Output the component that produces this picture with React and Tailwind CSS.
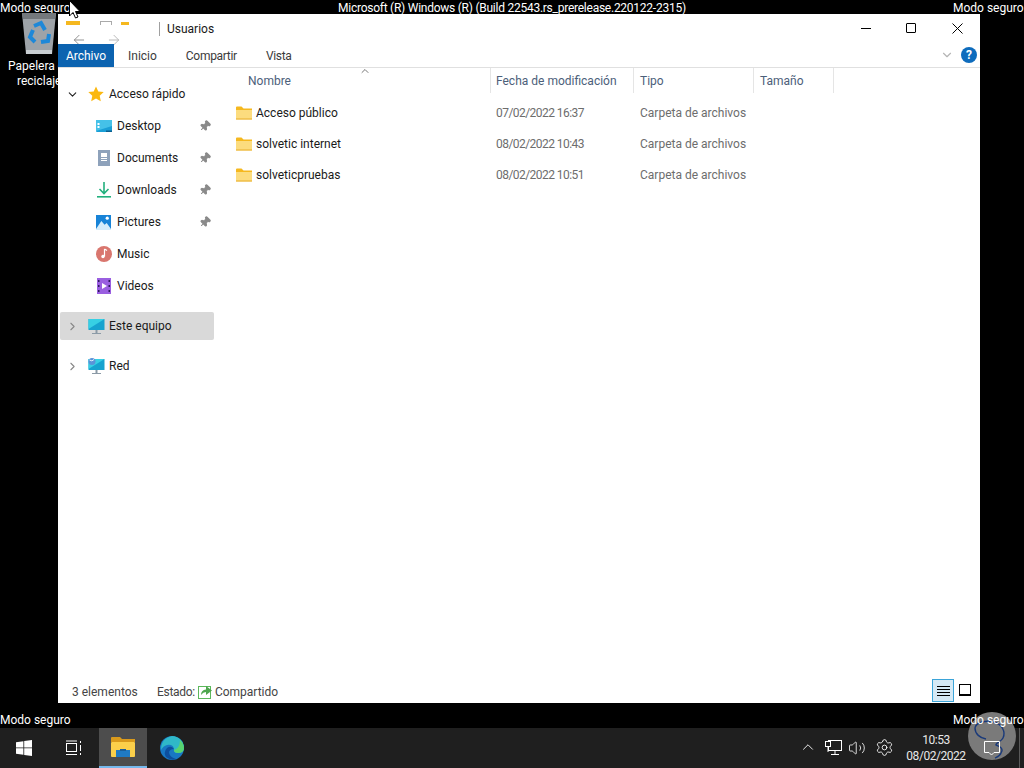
import React from 'react';
import { ChevronDown, ChevronRight, ChevronUp, Pin, ArrowLeft, ArrowRight, Settings, Volume2 } from 'lucide-react';

const font = { fontFamily: 'Roboto, "Noto Sans", sans-serif' };

function FolderIcon() {
  return (
    <svg width="16" height="14" viewBox="0 0 16 14" className="shrink-0">
      <path d="M0 1.5 Q0 0.5 1 0.5 H5.5 L7.5 2.5 H16 V13 H0 Z" fill="#f5b81f" />
      <path d="M0 4 H16 V13 Q16 13.5 15 13.5 H1 Q0 13.5 0 13 Z" fill="#fcdc7e" />
      <path d="M0 12.5 H16 V13.5 H0 Z" fill="#e8ae2c" />
    </svg>
  );
}

function DesktopIcon() {
  return (
    <svg width="16" height="12" viewBox="0 0 16 12">
      <rect width="16" height="12" rx="1" fill="#1a9fd6" />
      <path d="M0 0 H16 V6 L0 11 Z" fill="#45c1e8" />
      <rect x="1.5" y="3" width="2" height="2" fill="#fff" />
      <rect x="1.5" y="6" width="2" height="2" fill="#fff" />
      <rect x="10" y="10.5" width="6" height="1.5" fill="#0b5f8f" />
    </svg>
  );
}

function DocumentsIcon() {
  return (
    <svg width="12" height="16" viewBox="0 0 12 16">
      <rect width="12" height="16" fill="#8ea2bb" />
      <rect x="3" y="3" width="6" height="4" fill="#fff" />
      <rect x="3" y="8" width="6" height="1" fill="#fff" />
      <rect x="3" y="10" width="6" height="1" fill="#fff" />
    </svg>
  );
}

function DownloadsIcon() {
  return (
    <svg width="14" height="16" viewBox="0 0 14 16">
      <path d="M7 0 V11 M2.5 7 L7 11.5 L11.5 7" fill="none" stroke="#22b07d" strokeWidth="1.6" />
      <rect y="14" width="14" height="1.6" fill="#22b07d" />
    </svg>
  );
}

function PicturesIcon() {
  return (
    <svg width="15" height="15" viewBox="0 0 14 14">
      <rect width="14" height="14" fill="#1883d7" />
      <circle cx="10.5" cy="3" r="1.5" fill="#fff" />
      <path d="M0 13 L5 5.5 L8 9 L10 7.5 L14 13 V14 H0 Z" fill="#d5ecfb" />
    </svg>
  );
}

function MusicIcon() {
  return (
    <svg width="16" height="16" viewBox="0 0 16 16">
      <circle cx="8" cy="8" r="8" fill="#d9766e" />
      <path d="M8.5 3 V10.5" stroke="#fff" strokeWidth="1.2" />
      <path d="M8.5 3 L11 4.5" stroke="#fff" strokeWidth="1.2" />
      <circle cx="7" cy="10.5" r="1.7" fill="#fff" />
    </svg>
  );
}

function VideosIcon() {
  return (
    <svg width="14" height="16" viewBox="0 0 14 16">
      <rect width="14" height="16" fill="#9a5fe0" />
      <path d="M5 5 L10 8 L5 11 Z" fill="#fff" />
      <rect x="1" y="2" width="1.5" height="2" fill="#2d1a5c" />
      <rect x="1" y="7" width="1.5" height="2" fill="#2d1a5c" />
      <rect x="1" y="12" width="1.5" height="2" fill="#2d1a5c" />
      <rect x="11.5" y="2" width="1.5" height="2" fill="#2d1a5c" />
      <rect x="11.5" y="7" width="1.5" height="2" fill="#2d1a5c" />
      <rect x="11.5" y="12" width="1.5" height="2" fill="#2d1a5c" />
    </svg>
  );
}

function MonitorIcon({ globe }) {
  return (
    <svg width="17" height="17" viewBox="0 0 17 17">
      <rect x="0.5" y="1" width="16" height="11" fill="#17a3cf" />
      <path d="M0.5 1 H16.5 L0.5 11 Z" fill="#37d0e4" />
      <rect x="7.5" y="12" width="2" height="3" fill="#8b9aa6" />
      <rect x="4" y="15" width="9" height="1" fill="#8b9aa6" />
      {globe && <circle cx="4" cy="3.5" r="3.5" fill="#5a93d8" />}
      {globe && <path d="M1.5 2 Q4 4 6 1.5" stroke="#dff0fb" fill="none" />}
    </svg>
  );
}

function NavRow({ icon, label, pinned }) {
  return (
    <div className="h-8 flex items-center pl-[37px] relative">
      <span className="w-[17px] h-4 flex items-center justify-center shrink-0">{icon}</span>
      <span className="ml-[5px] text-[12px] text-[#1a1a1a]">{label}</span>
      {pinned && (
        <Pin size={12} className="absolute left-[141px] text-[#8a8a8a] fill-[#8a8a8a] rotate-45" />
      )}
    </div>
  );
}

function FileRow({ name, date }) {
  return (
    <div className="h-[31px] flex items-center text-[12px]">
      <span className="w-[254px] pl-[6px] flex items-center gap-[4px] text-[#1a1a1a]">
        <FolderIcon />
        {name}
      </span>
      <span className="w-[156px] pl-[12px] text-[#6d6d6d] tracking-[-0.55px]">{date}</span>
      <span className="text-[#6d6d6d]">Carpeta de archivos</span>
    </div>
  );
}

function HeaderCell({ label, className }) {
  return (
    <div className={`h-[25px] flex items-center border-r border-[#e5e5e5] text-[12px] text-[#4c607a] ${className}`}>
      {label}
    </div>
  );
}

function RecycleBin() {
  return (
    <svg width="36" height="42" viewBox="0 0 36 42">
      <path d="M1 0 H35 L31 41 H5 Z" fill="#9ea3a8" />
      <path d="M1 0 H35 L34 6 H2 Z" fill="#74787c" />
      <rect x="5" y="37" width="26" height="4" fill="#c9ced2" />
      <g fill="none" stroke="#1e88d8" strokeWidth="4">
        <path d="M13 13 L20 10 L24 17" />
        <path d="M28 21 L27 28 L20 29" />
        <path d="M14 29 L9 24 L12 17" />
      </g>
    </svg>
  );
}

function EdgeIcon() {
  return (
    <svg width="24" height="24" viewBox="0 0 24 24">
      <circle cx="12" cy="12" r="12" fill="#1878c4" />
      <path d="M12 0 A12 12 0 0 1 24 12 Q24 17 18 17 Q13 17 14 13 Q13 8 7 9 Q3 10 1 14 Q1 2 12 0 Z" fill="#2fb8c8" />
      <path d="M20 4 A12 12 0 0 1 24 12 Q24 17 18 17 Q14 17 14 14 Q20 12 20 4 Z" fill="#58d36f" />
      <path d="M14 13 Q10 13 9 16 Q9 21 16 23 Q11 25 6 21 Q3 16 7 12 Q11 9 14 13 Z" fill="#0d4f9e" />
    </svg>
  );
}

function ExplorerIcon() {
  return (
    <svg width="24" height="20" viewBox="0 0 24 20">
      <path d="M0 1 Q0 0 1 0 H9 L11 2 H24 V5 H0 Z" fill="#d99a1c" />
      <rect y="5" width="24" height="15" rx="1" fill="#fbcf4a" />
      <rect x="5" y="13" width="14" height="7" fill="#1f7ac4" />
      <rect x="9" y="12" width="6" height="2" fill="#1b5e9a" />
    </svg>
  );
}

export default function App() {
  return (
    <div className="w-[1024px] h-[768px] bg-black relative overflow-hidden flex flex-col" style={font}>
      {/* desktop */}
      <div className="flex-1 relative text-white text-[12px] whitespace-nowrap">
        <span className="absolute left-0 top-px leading-[14px]">Modo seguro</span>
        <span className="absolute left-[338px] top-px leading-[14px] tracking-[-0.25px]">Microsoft (R) Windows (R) (Build 22543.rs_prerelease.220122-2315)</span>
        <span className="absolute left-[953px] top-px leading-[14px]">Modo seguro</span>
        <span className="absolute left-0 top-[713px] leading-[14px]">Modo seguro</span>
        <span className="absolute left-[953px] top-[713px] leading-[14px] z-10">Modo seguro</span>

        <div className="absolute left-[21px] top-[13px]"><RecycleBin /></div>
        <span className="absolute left-[8px] top-[59px] leading-[14px]">Papelera de</span>
        <span className="absolute left-[17px] top-[74px] leading-[14px]">reciclaje</span>

        {/* explorer window */}
        <div className="absolute left-[58px] top-[14px] w-[922px] h-[689px] bg-white flex flex-col text-[#1a1a1a]">
          <div className="h-[30px] flex items-center shrink-0 relative">
            <div className="absolute left-[8px] top-[7px] w-[14px] h-[4px] bg-[#f5b81f]" />
            <div className="absolute left-[42px] top-[7px] w-[12px] h-[4px] border border-b-0 border-[#aaa]" />
            <div className="absolute left-[63px] top-[8px] w-[8px] h-[3px] bg-[#f5b81f]" />
            <ArrowLeft size={16} className="absolute left-[13px] top-[18px] text-[#8a8a8a]" strokeWidth={1.4} />
            <ArrowRight size={16} className="absolute left-[48px] top-[18px] text-[#b5b5b5]" strokeWidth={1.4} />
            <div className="absolute left-[101px] top-[8px] w-px h-[14px] bg-[#a0a0a0]" />
            <span className="absolute left-[109px] top-[7px] text-[12px] leading-[16px]">Usuarios</span>
            <div className="absolute left-[803px] top-[14px] w-[10px] h-px bg-black" />
            <div className="absolute left-[848px] top-[9px] w-[10px] h-[10px] border border-black rounded-[1px]" />
            <svg width="11" height="11" viewBox="0 0 11 11" className="absolute left-[894px] top-[9px]">
              <path d="M0.5 0.5 L10.5 10.5 M10.5 0.5 L0.5 10.5" stroke="#000" strokeWidth="1" />
            </svg>
          </div>
          <div className="h-[24px] flex items-stretch border-b border-[#e0e0e0] shrink-0 text-[12px] text-[#3b3b3b] relative">
            <div className="w-[56px] bg-[#0c63b0] text-white flex items-center justify-center">Archivo</div>
            <div className="ml-[14px] flex items-center">Inicio</div>
            <div className="ml-[29px] flex items-center tracking-[-0.3px]">Compartir</div>
            <div className="ml-[29px] flex items-center tracking-[-0.3px]">Vista</div>
            <ChevronDown size={14} className="absolute left-[882px] top-[4px] text-[#b5b5b5]" />
            <span className="absolute left-[903px] top-[3px] w-4 h-4 rounded-full bg-[#0e6cbd] text-white text-[12px] font-bold flex items-center justify-center">?</span>
          </div>

          <div className="flex-1 flex min-h-0">
            {/* navigation */}
            <div className="w-[172px] shrink-0 pt-[10px]">
              <div className="h-[32px] flex items-center pl-[8px] text-[12px]">
                <ChevronDown size={13} className="text-[#222]" strokeWidth={2} />
                <svg width="16" height="16" viewBox="0 0 16 16" className="ml-[9px]">
                  <path d="M8 0.5 L10.3 5.5 L15.7 6.1 L11.7 9.8 L12.8 15.2 L8 12.5 L3.2 15.2 L4.3 9.8 L0.3 6.1 L5.7 5.5 Z" fill="#fbb80f" />
                </svg>
                <span className="ml-[5px]">Acceso rápido</span>
              </div>
              <NavRow icon={<DesktopIcon />} label="Desktop" pinned />
              <NavRow icon={<DocumentsIcon />} label="Documents" pinned />
              <NavRow icon={<DownloadsIcon />} label="Downloads" pinned />
              <NavRow icon={<PicturesIcon />} label="Pictures" pinned />
              <NavRow icon={<MusicIcon />} label="Music" />
              <NavRow icon={<VideosIcon />} label="Videos" />
              <div className="mt-[10px] ml-[2px] w-[154px] h-[28px] bg-[#d9d9d9] rounded-[2px] flex items-center pl-[6px] text-[12px]">
                <ChevronRight size={13} className="text-[#888]" />
                <span className="ml-[9px]"><MonitorIcon /></span>
                <span className="ml-[4px]">Este equipo</span>
              </div>
              <div className="mt-[12px] ml-[2px] h-[28px] flex items-center pl-[6px] text-[12px]">
                <ChevronRight size={13} className="text-[#888]" />
                <span className="ml-[9px]"><MonitorIcon globe /></span>
                <span className="ml-[4px]">Red</span>
              </div>
            </div>

            {/* file list */}
            <div className="flex-1 min-w-0 relative">
              <ChevronUp size={12} className="absolute left-[129px] -top-[3px] text-[#777]" />
              <div className="flex">
                <HeaderCell label="Nombre" className="w-[261px] pl-[18px]" />
                <HeaderCell label="Fecha de modificación" className="w-[143px] pl-[5px]" />
                <HeaderCell label="Tipo" className="w-[120px] pl-[6px]" />
                <HeaderCell label="Tamaño" className="w-[80px] pl-[6px]" />
              </div>
              <div className="pt-[4px]">
                <FileRow name="Acceso público" date="07/02/2022 16:37" />
                <FileRow name="solvetic internet" date="08/02/2022 10:43" />
                <FileRow name="solveticpruebas" date="08/02/2022 10:51" />
              </div>
            </div>
          </div>

          {/* status bar */}
          <div className="h-[24px] shrink-0 flex items-center pl-[14px] text-[12px] text-[#444] relative pt-[1px]">
            <span className="w-[85px]">3 elementos</span>
            <span className="tracking-[-0.3px]">Estado:</span>
            <svg width="15" height="15" viewBox="0 0 15 15" className="ml-[3px]">
              <rect x="0.5" y="2.5" width="12" height="12" fill="#fff" stroke="#5cb85c" />
              <path d="M3 11 Q3 6 8 5.5 V2 L14 6.5 L8 11 V8 Q5 8 3 11 Z" fill="#4fa64f" />
            </svg>
            <span className="ml-[2px]">Compartido</span>
            <div className="absolute left-[874px] top-0 w-[22px] h-[23px] bg-[#d5e9f5] border border-[#3ba4d8] flex flex-col items-center justify-center gap-[2px]">
              <div className="w-[13px] h-px bg-black" />
              <div className="w-[13px] h-px bg-black" />
              <div className="w-[13px] h-px bg-black" />
              <div className="w-[13px] h-px bg-black" />
            </div>
            <div className="absolute left-[901px] top-[5px] w-[12px] h-[12px] border border-black border-b-2" />
          </div>
        </div>
      </div>

      {/* taskbar */}
      <div className="h-[40px] shrink-0 bg-[#1f1f1f] flex items-stretch relative text-white">
        <div className="w-[48px] flex items-center justify-center">
          <svg width="16" height="16" viewBox="0 0 16 16" fill="#fff">
            <path d="M0 2.2 L7.4 1.2 V7.5 H0 Z M8.2 1.1 L16 0 V7.5 H8.2 Z M0 8.3 H7.4 V14.7 L0 13.7 Z M8.2 8.3 H16 V16 L8.2 14.9 Z" />
          </svg>
        </div>
        <div className="w-[51px] flex items-center justify-center">
          <svg width="16" height="16" viewBox="0 0 16 16" fill="none" stroke="#fff" strokeWidth="1">
            <rect x="0.5" y="3.5" width="10" height="8" />
            <path d="M0 1 H11 M0 14.5 H11 M14.5 1 V3 M14.5 5 V11 M14.5 13 V15" />
          </svg>
        </div>
        <div className="w-[48px] bg-[#4d4d4d] border-b-[2px] border-[#76b9ed] flex items-center justify-center">
          <ExplorerIcon />
        </div>
        <div className="w-[50px] flex items-center justify-center">
          <EdgeIcon />
        </div>
        <div className="flex-1" />
        <div className="flex items-center relative w-[220px]">
          <ChevronUp size={18} className="absolute left-[-5px] top-[10px]" strokeWidth={1.2} />
          <svg width="17" height="15" viewBox="0 0 17 15" fill="none" stroke="#fff" className="absolute left-[21px] top-[12px]">
            <rect x="3.5" y="0.5" width="13" height="10" fill="#1f1f1f" />
            <rect x="0.5" y="1.5" width="5" height="5" fill="#1f1f1f" />
            <path d="M3 7 V12 M10 11 V14 M6 14.5 H14" />
          </svg>
          <Volume2 size={18} className="absolute left-[44px] top-[11px]" strokeWidth={1.1} />
          <Settings size={19} className="absolute left-[71px] top-[10px]" strokeWidth={1.1} />
          <div className="absolute left-[97px] top-0 w-[70px] h-[40px] text-[12px] leading-[16px] flex flex-col items-center justify-center text-[#e8e8e8] tracking-[-0.45px]">
            <span>10:53</span>
            <span>08/02/2022</span>
          </div>
        </div>
        <div className="w-px bg-[#5a5a5a] absolute left-[1019px] top-0 h-full" />
      </div>

      {/* watermark badge over the corner */}
      <div className="absolute left-[968px] top-[712px] w-[48px] h-[48px] rounded-full bg-[#7a7a7a]">
        <svg width="48" height="48" viewBox="0 0 48 48" fill="none" stroke="#1a3a7a" strokeWidth="1.4">
          <path d="M18 27 C12 26 7 22 7 16 C8 10 18 8 26 10 C34 12 38 20 35 26 C33 30 27 31 28 33 C32 35 36 36 33 41 C32 44 29 45 27 46" />
        </svg>
      </div>
      <svg width="16" height="15" viewBox="0 0 16 15" fill="none" stroke="#fff" className="absolute left-[984px] top-[741px] z-10">
        <path d="M0.5 0.5 H15.5 V11.5 H10 L7.5 14 L5 11.5 H0.5 Z" />
      </svg>

      {/* mouse pointer */}
      <svg width="12" height="19" viewBox="0 0 12 19" className="absolute left-[69px] top-0">
        <path d="M0.5 0.5 V16 L4 12.5 L6.5 18 L9 17 L6.5 11.5 H11 Z" fill="#fff" stroke="#000" />
      </svg>
    </div>
  );
}
